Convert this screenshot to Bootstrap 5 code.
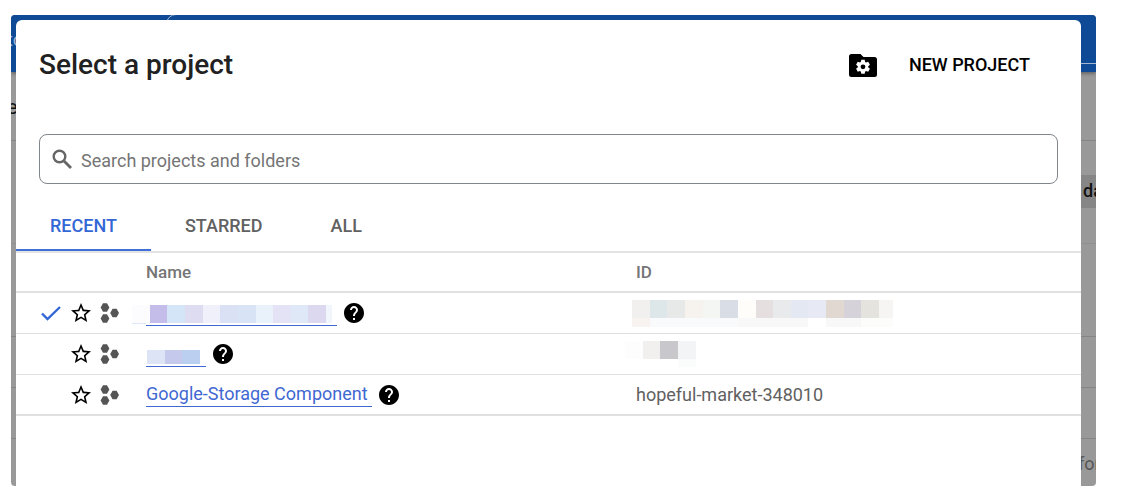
<!DOCTYPE html>
<html lang="en">
<head>
<meta charset="utf-8">
<meta name="viewport" content="width=device-width, initial-scale=1">
<title>Select a project</title>
<link href="https://cdn.jsdelivr.net/npm/bootstrap@5.3.0/dist/css/bootstrap.min.css" rel="stylesheet">
<style>
  body { font-family: Roboto, "Liberation Sans", sans-serif; font-size: 18px; line-height: 24px; background: #fff; color: #212121; }
  .stage { min-height: 100vh; padding: 15px 35px 3px 11px; }
  .console { border-radius: 4px; background: #999; padding: 5px 15px 0 5px; }
  /* dimmed page behind the dialog */
  .behind { inset: 0; border-radius: 4px; color: #111; }
  .behind-top { height: 57px; background: #0f4a96; color: #9fb4d3; box-shadow: 0 1px 4px rgba(0,0,0,.45); position: relative; }
  .behind-search { margin: -1px -10px 8px 155px; border: 1px solid #a3b5cf; border-radius: 10px; height: 50px; }
  .behind-brand { width: 155px; margin-right: -155px; padding-top: 13px; text-indent: -4px; }
  .behind-row { border-bottom: 1px solid #858585; }
  .behind-title { height: 69px; padding-top: 23px; text-indent: -4px; font-size: 20px; }
  .behind-tools { height: 103px; padding-top: 34px; border-color: #909090; }
  .chip { background: #868686; padding: 4px 0 4px 8px; height: 33px; width: 21px; overflow: hidden; font-weight: 500; }
  .h-a { height: 93px; } .h-b { height: 51px; }
  .behind-foot { color: #555; padding-top: 13px; }
  .behind-foot span { width: 18px; }

  .dialog { background: #fff; border-radius: 6px 6px 0 0; z-index: 1; }
  .dialog-head { padding: 25px 51px 0 23px; }
  .dialog-title { font-size: 28px; line-height: 40px; font-weight: 500; margin: 0; }
  .new-btn { --bs-btn-color: #000; --bs-btn-hover-color: #000; --bs-btn-font-size: 18px; --bs-btn-line-height: 24px; --bs-btn-font-weight: 500; gap: 32px; padding: 8px 0; border: 0; }
  .search-wrap { margin: 49px 23px 20px; height: 50px; border: 1px solid #80868b; border-radius: 8px; padding: 0 12px; gap: 8px; }
  .search-wrap input { font-size: 18px; line-height: 24px; padding: 4px 0 0; color: #212121; }
  .search-wrap input::placeholder { color: #757575; opacity: 1; }
  .search-wrap input:focus { box-shadow: none; }

  .tabs { --bs-nav-link-color: #616161; --bs-nav-link-hover-color: #616161; border-bottom: 2px solid #e4e4e4; }
  .tabs .nav-link { padding: 10px 34px 11px; border-bottom: 2px solid transparent; font-size: 18px; line-height: 24px; font-weight: 500; }
  .tabs .nav-link.active { color: #3367d6; border-color: #3f70d9; }

  .projects { --bs-table-color: #616161; margin: 0; table-layout: fixed; border-collapse: separate; border-spacing: 0; border-color: #e0e0e0; }
  .projects th, .projects td { padding: 0; height: 41px; vertical-align: middle; border-width: 0 0 1px; }
  .projects th { font-size: 17px; font-weight: 500; color: #757575; height: 40px; }
  .projects thead tr th, .projects tbody tr:last-child td { border-bottom-width: 2px; }
  .col-icons { width: 130px; } .col-name { width: 490px; }
  .icons { padding-left: 24px; gap: 7px; }
  .icons button, .help { border: 0; padding: 0; background: none; line-height: 0; color: #000; }
  .check { width: 22px; }
  .name { gap: 7px; }
  .name a { color: #3f68d2; text-decoration: none; border-bottom: 1px solid #3f68d2; padding-right: 4px; height: 25px; }
  .name a svg { overflow: visible; }
</style>
</head>
<body>
<svg class="d-none" aria-hidden="true">
  <symbol id="star" viewBox="0 0 24 24"><path fill="currentColor" d="M22 9.24l-7.19-.62L12 2 9.19 8.63 2 9.24l5.46 4.73L5.82 21 12 17.27 18.18 21l-1.63-7.03L22 9.24zM12 15.4l-3.76 2.27 1-4.28-3.32-2.88 4.38-.38L12 6.1l1.71 4.04 4.38.38-3.32 2.88 1 4.28L12 15.4z"/></symbol>
  <symbol id="hex" viewBox="0 0 20 20"><path fill="#555" d="M3 .3h4L9.4 4.500 7 8.700H3L.6 4.500zM3 11.300h4l2.400 4.200L7 19.700H3L.6 15.500zM12.600 5.800h4l2.400 4.200-2.400 4.200h-4L10.200 10z"/></symbol>
  <symbol id="help" viewBox="2 2 20 20"><path fill="currentColor" d="M12 2C6.480 2 2 6.480 2 12s4.480 10 10 10 10-4.480 10-10S17.520 2 12 2zm1 17h-2v-2h2v2zm2.070-7.750l-.9.920C13.450 12.900 13 13.500 13 15h-2v-.5c0-1.100.45-2.100 1.170-2.830l1.240-1.260c.37-.36.59-.86.59-1.410 0-1.100-.9-2-2-2s-2 .9-2 2H8c0-2.210 1.790-4 4-4s4 1.790 4 4c0 .88-.36 1.680-.93 2.250z"/></symbol>
</svg>
<div class="stage d-flex">
  <div class="console position-relative flex-fill d-flex">
    <div class="behind position-absolute overflow-hidden" aria-hidden="true">
      <div class="behind-top d-flex">
        <div class="behind-brand">to</div>
        <div class="behind-search flex-fill"></div>
      </div>
      <div class="behind-row behind-title">e</div>
      <div class="behind-row behind-tools d-flex justify-content-end"><div class="chip">da</div></div>
      <div class="behind-row h-a"></div>
      <div class="behind-row h-b"></div>
      <div class="behind-row h-b"></div>
      <div class="behind-foot d-flex justify-content-end"><span>for</span></div>
    </div>

    <main class="dialog flex-fill" role="dialog" aria-labelledby="dialogTitle">
      <div class="dialog-head d-flex justify-content-between align-items-center">
        <h1 class="dialog-title" id="dialogTitle">Select a project</h1>
        <button type="button" class="btn new-btn d-flex align-items-center">
          <svg width="28" height="23" viewBox="0 0 28 23" aria-hidden="true">
            <path d="M2.500 0h9l3 3h11A2.500 2.500 0 0 1 28 5.500v15a2.500 2.500 0 0 1-2.500 2.500h-23A2.500 2.500 0 0 1 0 20.500v-18A2.500 2.500 0 0 1 2.500 0z"/>
            <g transform="translate(14 12.800)" fill="#fff">
              <circle r="5.200"/>
              <path id="tooth" d="M-1.700-7h3.400l.6 3h-4.600z"/>
              <use href="#tooth" transform="rotate(60)"/><use href="#tooth" transform="rotate(120)"/><use href="#tooth" transform="rotate(180)"/><use href="#tooth" transform="rotate(240)"/><use href="#tooth" transform="rotate(300)"/>
              <circle r="2.400" fill="#000"/>
            </g>
          </svg>
          NEW PROJECT
        </button>
      </div>

      <div class="search-wrap d-flex align-items-center">
        <svg width="21" height="21" viewBox="0 0 21 21" fill="none" stroke="#666" class="flex-shrink-0" aria-hidden="true"><circle cx="7.500" cy="7.500" r="5.800" stroke-width="2.400"/><path d="M12 12l7 7" stroke-width="2.800"/></svg>
        <input type="text" class="form-control border-0 bg-transparent" placeholder="Search projects and folders" aria-label="Search projects and folders">
      </div>

      <nav class="nav tabs">
        <a class="nav-link active" aria-current="page" href="#recent">RECENT</a>
        <a class="nav-link" href="#starred">STARRED</a>
        <a class="nav-link" href="#all">ALL</a>
      </nav>

      <table class="table projects">
        <colgroup><col class="col-icons"><col class="col-name"><col></colgroup>
        <thead><tr><th></th><th scope="col">Name</th><th scope="col">ID</th></tr></thead>
        <tbody>
          <tr>
            <td><div class="icons d-flex align-items-center">
              <span class="check d-flex"><svg width="22" height="18" viewBox="0 0 22 18" fill="none" stroke="#3367d6" stroke-width="2.400" role="img" aria-label="Selected"><path d="M2 9.500l5.500 5.500L20 3"/></svg></span>
              <button type="button" aria-label="Star"><svg width="24" height="24"><use href="#star"/></svg></button>
              <svg width="20" height="20"><use href="#hex"/></svg>
            </div></td>
            <td><div class="name d-flex align-items-center">
              <a href="#project1" aria-label="Project"><svg width="187" height="18" shape-rendering="crispEdges">
                <path fill="#fcfcfe" d="M-14 0h18v18h-18z"/><path fill="#dfe8fa" d="M-14 18h14v1h-14z"/>
                <path fill="#c4bce9" d="M4 0h17v18H4z"/><path fill="#d5e5f8" d="M21 0h18v18H21z"/><path fill="#dddcf0" d="M39 0h18v18H39z"/>
                <path fill="#f0f0fa" d="M57 0h17v18H57z"/><path fill="#dae1f4" d="M74 0h18v18H74z"/><path fill="#d8e3f5" d="M92 0h18v18H92z"/>
                <path fill="#e9f2fb" d="M110 0h17v18h-17z"/><path fill="#e4e3f5" d="M127 0h18v18h-18z"/><path fill="#dfe8f7" d="M145 0h17v18h-17z"/>
                <path fill="#dcd8f0" d="M162 0h18v18h-18z"/><path fill="#f1f5fc" d="M180 0h6v18h-6z"/></svg></a>
              <button type="button" class="help" aria-label="Help"><svg width="20" height="20"><use href="#help"/></svg></button>
            </div></td>
            <td><svg width="257" height="27" viewBox="4 0 257 27" overflow="visible" shape-rendering="crispEdges" aria-hidden="true">
              <path fill="#f1f0ef" d="M0 0h18v18H0z"/><path fill="#dde7ea" d="M18 0h17v18H18z"/><path fill="#e6e9e8" d="M35 0h18v18H35z"/>
              <path fill="#f6f2ed" d="M53 0h18v18H53z"/><path fill="#f4f6f3" d="M71 0h17v18H71z"/><path fill="#d8dde6" d="M88 0h18v18H88z"/>
              <path fill="#fefdf9" d="M106 0h18v18h-18z"/><path fill="#e5e0df" d="M124 0h17v18h-17z"/><path fill="#e8eaec" d="M141 0h18v18h-18z"/>
              <path fill="#e4e8f2" d="M159 0h17v18h-17z"/><path fill="#e7eaf4" d="M176 0h18v18h-18z"/><path fill="#e1d8d2" d="M194 0h18v18h-18z"/>
              <path fill="#d5d3d9" d="M212 0h17v18h-17z"/><path fill="#e4e3dd" d="M229 0h18v18h-18z"/><path fill="#f7f5f4" d="M247 0h14v18h-14z"/>
              <path fill="#f8f3f0" d="M0 18h18v9H0z"/><path fill="#f8fafc" d="M18 18h88v9H18z"/><path fill="#f8f8f8" d="M106 18h70v9h-70zM194 18h35v9h-35z"/><path fill="#fcfcfb" d="M229 18h32v9h-32z"/></svg></td>
          </tr>
          <tr>
            <td><div class="icons d-flex align-items-center">
              <span class="check"></span>
              <button type="button" aria-label="Star"><svg width="24" height="24"><use href="#star"/></svg></button>
              <svg width="20" height="20"><use href="#hex"/></svg>
            </div></td>
            <td><div class="name d-flex align-items-center">
              <a href="#project2" aria-label="Project"><svg width="56" height="18" shape-rendering="crispEdges">
                <path fill="#dce4f6" d="M1 4h18v14H1z"/><path fill="#c5caec" d="M19 4h17v14H19z"/><path fill="#bbcff0" d="M36 4h18v14H36z"/></svg></a>
              <button type="button" class="help" aria-label="Help"><svg width="20" height="20"><use href="#help"/></svg></button>
            </div></td>
            <td><svg width="60" height="26" viewBox="11 0 60 26" overflow="visible" shape-rendering="crispEdges" aria-hidden="true">
              <path fill="#fdfdfd" d="M0 0h18v18H0z"/><path fill="#f1f0ef" d="M18 0h17v18H18z"/><path fill="#c8c7cc" d="M35 0h18v18H35z"/><path fill="#f2f4f6" d="M53 0h18v18H53z"/><path fill="#fafcfb" d="M53 18h18v8H53z"/></svg></td>
          </tr>
          <tr>
            <td><div class="icons d-flex align-items-center">
              <span class="check"></span>
              <button type="button" aria-label="Star"><svg width="24" height="24"><use href="#star"/></svg></button>
              <svg width="20" height="20"><use href="#hex"/></svg>
            </div></td>
            <td><div class="name d-flex align-items-center">
              <a href="#storage">Google-Storage Component</a>
              <button type="button" class="help" aria-label="Help"><svg width="20" height="20"><use href="#help"/></svg></button>
            </div></td>
            <td>hopeful-market-348010</td>
          </tr>
        </tbody>
      </table>
    </main>
  </div>
</div>
<script src="https://cdn.jsdelivr.net/npm/bootstrap@5.3.0/dist/js/bootstrap.bundle.min.js"></script>
</body>
</html>
